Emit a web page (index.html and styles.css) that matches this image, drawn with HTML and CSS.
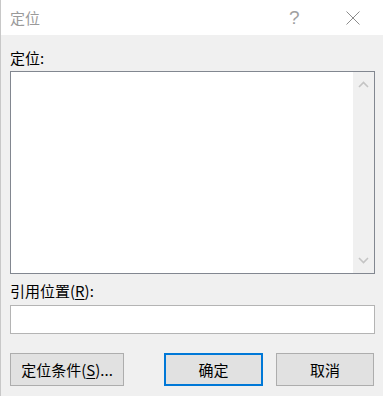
FILE: index.html
```html
<!DOCTYPE html>
<html lang="zh-CN">
<head>
<meta charset="utf-8">
<title>定位</title>
<link rel="stylesheet" href="styles.css">
</head>
<body>
<div class="window">
  <div class="titlebar">
    <span class="title">定位</span>
    <span class="help">?</span>
    <span class="close">
      <svg width="14" height="14" viewBox="0 0 14 14"><path d="M0.5 0.5 L13.5 13.5 M13.5 0.5 L0.5 13.5" stroke="#8c8c8c" stroke-width="1" fill="none"/></svg>
    </span>
  </div>
  <div class="content">
    <div class="label label-top">定位:</div>
    <div class="listbox">
      <div class="list-area"></div>
      <div class="scrollbar">
        <svg class="arrow" width="11" height="7" viewBox="0 0 11 7"><path d="M1 6 L5.5 1.5 L10 6" stroke="#c4c4c4" stroke-width="1.6" fill="none"/></svg>
        <svg class="arrow" width="11" height="7" viewBox="0 0 11 7"><path d="M1 1 L5.5 5.5 L10 1" stroke="#c4c4c4" stroke-width="1.6" fill="none"/></svg>
      </div>
    </div>
    <div class="label label-ref">引用位置(<u>R</u>):</div>
    <div class="input"></div>
    <div class="buttons">
      <div class="btn btn-special">定位条件(<u>S</u>)...</div>
      <div class="btn-group">
        <div class="btn btn-ok">确定</div>
        <div class="btn btn-cancel">取消</div>
      </div>
    </div>
  </div>
</div>
</body>
</html>
```
FILE: styles.css
```css
html, body {
  margin: 0;
  padding: 0;
  background: #f0f0f0;
}
body {
  width: 383px;
  height: 396px;
  overflow: hidden;
  font-family: "Noto Sans CJK SC", sans-serif;
  font-size: 15px;
  color: #000;
}
.window {
  width: 383px;
  height: 396px;
  box-sizing: border-box;
  border-left: 1px solid #c8c8c8;
  background: #f0f0f0;
  display: flex;
  flex-direction: column;
}
.titlebar {
  height: 35px;
  background: #fff;
  display: flex;
  align-items: center;
  padding-left: 9px;
  flex: none;
}
.title {
  color: #9a9a9a;
  font-size: 15px;
  line-height: 20px;
}
.help {
  margin-left: auto;
  color: #a0a0a0;
  font-size: 19px;
  font-family: "Liberation Sans", sans-serif;
  line-height: 22px;
  width: 11px;
}
.close {
  margin-left: 46px;
  margin-right: 23px;
  display: flex;
  align-items: center;
  height: 14px;
}
.content {
  padding: 13px 0 0 9px;
  display: flex;
  flex-direction: column;
}
.label {
  height: 20px;
  line-height: 20px;
  font-size: 15px;
}
.label u {
  text-decoration-thickness: 1px;
  text-underline-offset: 2px;
}
.listbox {
  margin-top: 3px;
  width: 365px;
  height: 203px;
  box-sizing: border-box;
  border: 1px solid #828790;
  background: #fff;
  display: flex;
}
.list-area {
  flex: 1;
}
.scrollbar {
  width: 21px;
  background: #f0f0f0;
  display: flex;
  flex-direction: column;
  justify-content: space-between;
  align-items: center;
  padding: 9px 0 9px;
}
.arrow {
  display: block;
}
.label-ref {
  margin-top: 7px;
}
.input {
  margin-top: 4px;
  width: 365px;
  height: 29px;
  box-sizing: border-box;
  border: 1px solid #b4b4b4;
  background: #fff;
}
.buttons {
  margin-top: 19px;
  width: 364px;
  display: flex;
}
.btn-group {
  margin-left: auto;
  display: flex;
  gap: 13px;
}
.btn {
  height: 33px;
  box-sizing: border-box;
  border: 1px solid #adadad;
  background: #e1e1e1;
  display: flex;
  align-items: center;
  justify-content: center;
  font-size: 15px;
}
.btn u {
  text-decoration-thickness: 1px;
  text-underline-offset: 2px;
}
.btn-special {
  width: 114px;
}
.btn-ok {
  width: 99px;
  border: 2px solid #0078d7;
}
.btn-cancel {
  width: 98px;
}
```
